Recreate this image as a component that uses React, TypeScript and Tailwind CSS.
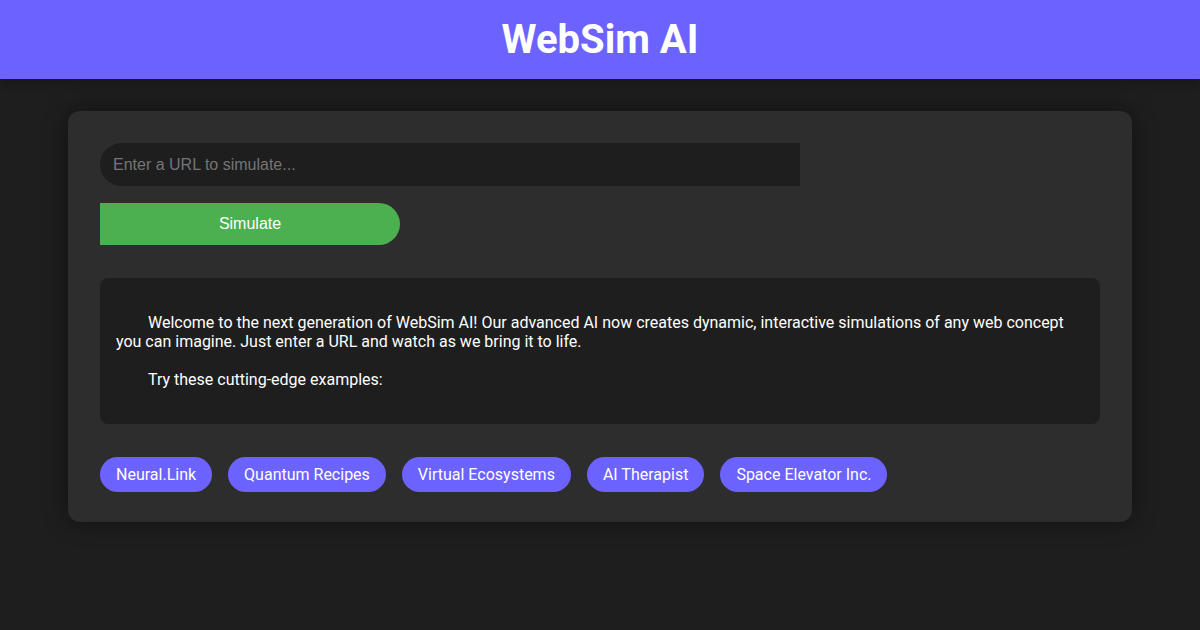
import React from "react";

const examples = [
  "Neural.Link",
  "Quantum Recipes",
  "Virtual Ecosystems",
  "AI Therapist",
  "Space Elevator Inc.",
];

export default function App() {
  return (
    <div className="min-h-[630px] bg-[#1e1e1e] text-white font-['Roboto',sans-serif]">
      <header className="bg-[#6c63ff] py-4 text-center shadow-[0_2px_10px_rgba(0,0,0,0.3)]">
        <h1 className="text-[40px] font-bold leading-[47px]">WebSim AI</h1>
      </header>

      <main className="px-[68px] pt-8">
        <div className="rounded-xl bg-[#2d2d2d] px-8 pt-8 pb-[30px] shadow-[0_0_24px_rgba(0,0,0,0.45)]">
          <input
            type="text"
            placeholder="Enter a URL to simulate..."
            className="block h-[43px] w-[700px] rounded-l-[22px] bg-[#1e1e1e] px-[13px] font-['Liberation_Sans',Arial,sans-serif] text-base text-white outline-none placeholder:text-[#757575]"
          />
          <button className="mt-[17px] block h-[42px] w-[300px] rounded-r-[22px] bg-[#4caf50] font-['Liberation_Sans',Arial,sans-serif] text-base text-white">
            Simulate
          </button>

          <div className="mt-[33px] rounded-lg bg-[#1e1e1e] px-4 pt-[35px] pb-[35px] text-base leading-[19px]">
            <p className="indent-8">
              Welcome to the next generation of WebSim AI! Our advanced AI now creates dynamic,
              interactive simulations of any web concept you can imagine. Just enter a URL and
              watch as we bring it to life.
            </p>
            <p className="mt-[19px] indent-8">Try these cutting-edge examples:</p>
          </div>

          <div className="mt-[33px] flex flex-wrap gap-4">
            {examples.map((ex) => (
              <span
                key={ex}
                className="rounded-full bg-[#6c63ff] px-4 py-2 text-base leading-[19px] text-white"
              >
                {ex}
              </span>
            ))}
          </div>
        </div>
      </main>
    </div>
  );
}
